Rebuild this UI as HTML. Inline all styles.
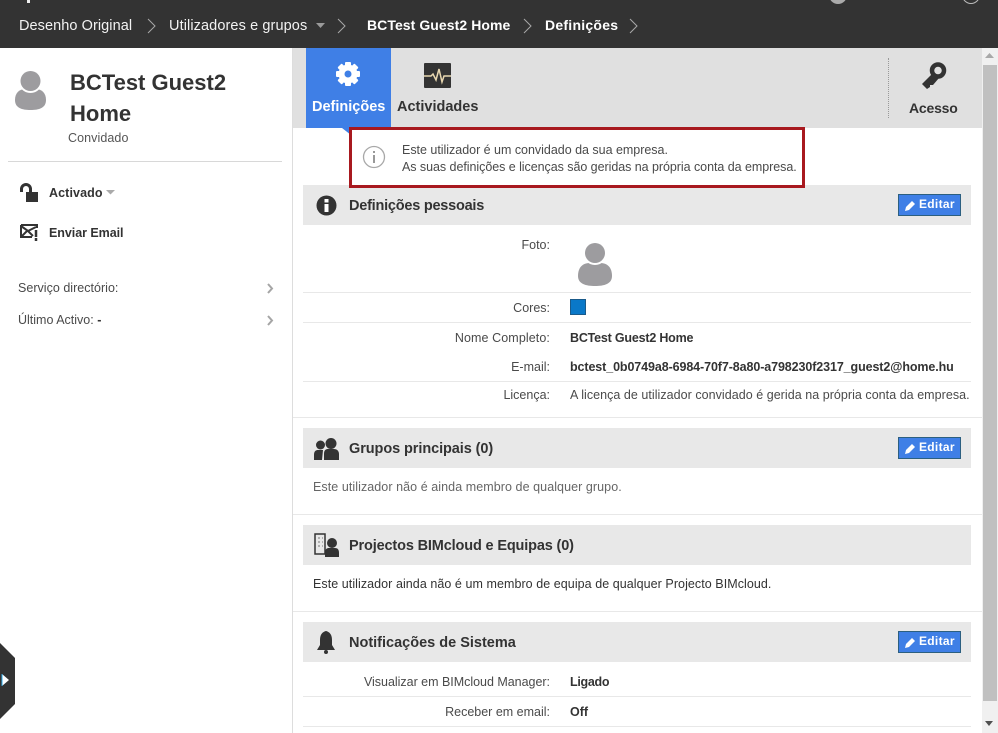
<!DOCTYPE html>
<html><head><meta charset="utf-8">
<style>
html,body{margin:0;padding:0;background:#fff;}
body{width:998px;height:733px;position:relative;overflow:hidden;font-family:"Liberation Sans",sans-serif;color:#333;}
.a{position:absolute;}
.t{position:absolute;white-space:nowrap;font-size:12.5px;line-height:16px;color:#4a4a4a;letter-spacing:0;}
.r{text-align:right;right:448px;}
.b{font-weight:bold;color:#333;}
.h{position:absolute;left:303px;width:668px;height:40px;background:#e8e8e8;}
.ht{position:absolute;left:349px;white-space:nowrap;font-size:14.5px;font-weight:bold;color:#333;line-height:20px;}
.l{position:absolute;height:1px;background:#e8e8e8;left:303px;width:668px;}
.ed{position:absolute;left:898px;width:61px;height:20px;background:#3f7fe6;border:1px solid #2c5f80;color:#fff;font-weight:bold;font-size:12px;line-height:20px;letter-spacing:.3px;}
.ed span{position:absolute;left:20px;top:-1px;}
.ed svg{position:absolute;left:6px;top:4px;}
.nav{position:absolute;top:17px;font-size:14.5px;line-height:18px;color:#f2f2f2;white-space:nowrap;}
</style></head><body>
<div class="a" style="left:0;top:0;width:998px;height:48px;background:#333;"></div>
<div class="a" style="left:27px;top:0;width:3px;height:3px;background:#eee;"></div>
<div class="a" style="left:829px;top:-14px;width:18px;height:18px;border-radius:50%;background:#aaa;"></div>
<div class="a" style="left:962px;top:-14px;width:16px;height:16px;border-radius:50%;border:1px solid #bbb;"></div>
<div class="nav" style="left:19px;letter-spacing:.07px;">Desenho Original</div>
<div class="nav" style="left:169px;letter-spacing:.1px;">Utilizadores e grupos</div>
<div class="nav b" style="left:367px;top:16px;color:#fff;font-weight:bold;font-size:14px;letter-spacing:.07px;">BCTest Guest2 Home</div>
<div class="nav b" style="left:545px;top:16px;color:#fff;font-weight:bold;font-size:14px;letter-spacing:.25px;">Definições</div>
<svg class="a" style="left:0;top:0;" width="660" height="48" fill="none" stroke="#a8a8a8" stroke-width="1">
<path d="M148 19l7 7-7 7M338 19l7 7-7 7M524 19l7 7-7 7M630 19l7 7-7 7"/>
<path d="M316 23h9l-4.500 5z" fill="#9a9a9a" stroke="none"/>
</svg>

<!-- left panel -->
<div class="a" style="left:292px;top:48px;width:1px;height:685px;background:#ddd;"></div>
<svg class="a" style="left:14px;top:70px;" width="34" height="42"><path d="M1 30C1 23 5 19 12 19h9c7 0 11 4 11 11 0 8-7 10-15.500 10S1 38 1 30z" fill="#9d9c9f"/><circle cx="16.500" cy="11" r="12" fill="#fff"/><circle cx="16.500" cy="11" r="10" fill="#9d9c9f"/></svg>
<div class="t" style="left:70px;top:67px;font-size:22px;line-height:31px;font-weight:bold;color:#333;">BCTest Guest2<br>Home</div>
<div class="t" style="left:68px;top:130px;color:#555;letter-spacing:.08px;">Convidado</div>
<div class="a" style="left:8px;top:161px;width:274px;height:1px;background:#d8d8d8;"></div>
<svg class="a" style="left:18px;top:182px;" width="22" height="22"><path d="M3.500 10V7a4.500 4.500 0 0 1 9 0v4" fill="none" stroke="#333" stroke-width="3"/><rect x="8" y="10" width="12" height="10" fill="#333"/></svg>
<div class="t b" style="left:49px;top:185px;font-size:12.5px;letter-spacing:.1px;">Activado</div>
<svg class="a" style="left:106px;top:190px;" width="10" height="6"><path d="M0 0h9l-4.500 4.500z" fill="#aaa"/></svg>
<svg class="a" style="left:19px;top:223px;" width="20" height="20" fill="none" stroke="#333" stroke-width="2"><path d="M2 2h16v3M2 2v12h11M2 3l7 5 8-4M2 14l6-6M9 8l5 5"/><path d="M17 7v7M17 15v3" stroke-width="2.500"/></svg>
<div class="t b" style="left:49px;top:225px;letter-spacing:-.05px;">Enviar Email</div>
<div class="t" style="left:18px;top:280px;letter-spacing:.02px;">Serviço directório:</div>
<div class="t" style="left:18px;top:312px;">Último Activo: <span class="b">-</span></div>
<svg class="a" style="left:266px;top:283px;" width="10" height="46" fill="none" stroke="#a5a5a5" stroke-width="2"><path d="M2 1l4 4.500-4 4.500M2 33l4 4.500-4 4.500"/></svg>
<svg class="a" style="left:0;top:643px;" width="16" height="76"><path d="M0 0l15 15v46L0 76z" fill="#333"/><path d="M2 31l7 6-7 6z" fill="#fff"/><path d="M2 31v12" stroke="#2aa8e8" stroke-width="1"/></svg>

<!-- tabs -->
<div class="a" style="left:293px;top:48px;width:689px;height:80px;background:#e0e0e0;"></div>
<div class="a" style="left:306px;top:48px;width:85px;height:80px;background:#3f7fe6;"></div>
<svg class="a" style="left:342px;top:128px;" width="10" height="8"><path d="M0 0h9v7z" fill="#3f7fe6"/></svg>
<svg class="a" style="left:335px;top:61px;" width="26" height="26" viewBox="0 0 26 26"><g fill="#fff"><circle cx="13" cy="13" r="9.500"/><rect x="10" y="1" width="6" height="24" rx="1"/><rect x="10" y="1" width="6" height="24" rx="1" transform="rotate(45 13 13)"/><rect x="10" y="1" width="6" height="24" rx="1" transform="rotate(90 13 13)"/><rect x="10" y="1" width="6" height="24" rx="1" transform="rotate(135 13 13)"/></g><circle cx="13" cy="13" r="3.500" fill="#3f7fe6"/></svg>
<div class="t" style="left:312px;top:98px;font-size:14.5px;line-height:18px;font-weight:bold;color:#fff;">Definições</div>
<svg class="a" style="left:424px;top:63px;" width="28" height="26"><rect width="27" height="25" rx="1" fill="#333"/><path d="M0 13h7l2-2 3 6 3-11 3 13 2-6h7" fill="none" stroke="#e8d7b0" stroke-width="1.500"/></svg>
<div class="t" style="left:397px;top:98px;font-size:14.5px;line-height:18px;font-weight:bold;color:#333;">Actividades</div>
<div class="a" style="left:888px;top:58px;height:60px;border-left:1px dotted #999;"></div>
<svg class="a" style="left:920px;top:61px;" width="28" height="30"><circle cx="18" cy="9.500" r="6" fill="none" stroke="#333" stroke-width="4.500"/><path d="M13 12L2 23l5 5 3-2v-2h3l6-7z" fill="#333"/></svg>
<div class="t" style="left:909px;top:99px;font-size:14px;line-height:18px;font-weight:bold;color:#333;letter-spacing:-.2px;">Acesso</div>

<!-- scrollbar -->
<div class="a" style="left:982px;top:48px;width:16px;height:685px;background:#f0f0f0;"></div>
<div class="a" style="left:983px;top:65px;width:14px;height:636px;background:#c0c0c0;"></div>
<svg class="a" style="left:985px;top:53px;" width="12" height="8"><path d="M4.500 0l4.500 5H0z" fill="#a8a8a8"/></svg>
<svg class="a" style="left:985px;top:720px;" width="12" height="8"><path d="M0 1h8L4 6z" fill="#505050"/></svg>

<!-- personal -->
<div class="h" style="top:185px;"></div>
<svg class="a" style="left:316px;top:195px;" width="21" height="21"><circle cx="10.500" cy="10.500" r="10" fill="#333"/><rect x="8.500" y="9" width="4" height="8" fill="#fff"/><rect x="8.500" y="4" width="4" height="3.500" fill="#fff"/></svg>
<div class="ht" style="top:196px;letter-spacing:-.23px;">Definições pessoais</div>
<div class="ed" style="top:194px;"><svg width="12" height="12"><path d="M0 12l1-4 6-6 3 3-6 6z" fill="#fff"/></svg><span>Editar</span></div>

<div class="t r" style="top:237px;">Foto:</div>
<svg class="a" style="left:578px;top:243px;" width="35" height="44"><path d="M0 33C0 25 4 20 12 20h10c8 0 12 5 12 13 0 8-8 10-17 10S0 41 0 33z" fill="#9d9c9f"/><circle cx="17" cy="10" r="12" fill="#fff"/><circle cx="17" cy="10" r="10" fill="#9d9c9f"/></svg>
<div class="l" style="top:292px;"></div>
<div class="t r" style="top:300px;">Cores:</div>
<div class="a" style="left:570px;top:299px;width:14px;height:14px;background:#0a78c8;border:1px solid #1a5a8a;"></div>
<div class="l" style="top:322px;"></div>
<div class="t r" style="top:330px;letter-spacing:.1px;">Nome Completo:</div>
<div class="t b" style="left:570px;top:330px;letter-spacing:-.2px;">BCTest Guest2 Home</div>
<div class="t r" style="top:359px;">E-mail:</div>
<div class="t b" style="left:570px;top:359px;letter-spacing:-.1px;">bctest_0b0749a8-6984-70f7-8a80-a798230f2317_guest2@home.hu</div>
<div class="l" style="top:381px;"></div>
<div class="t r" style="top:387px;">Licença:</div>
<div class="t" style="left:570px;top:387px;letter-spacing:.04px;">A licença de utilizador convidado é gerida na própria conta da empresa.</div>
<div class="a" style="left:293px;top:417px;width:689px;height:1px;background:#e8e8e8;"></div>

<!-- notice -->
<div class="a" style="left:349px;top:127px;width:450px;height:55px;border:3px solid #a8191f;background:#fff;"></div>
<svg class="a" style="left:362px;top:145px;" width="24" height="24"><circle cx="12" cy="12" r="10.500" fill="none" stroke="#a8a8a8" stroke-width="1.300"/><rect x="11" y="10" width="2" height="8" fill="#999"/><rect x="11" y="6" width="2" height="2" fill="#999"/></svg>
<div class="t" style="left:402px;top:142px;letter-spacing:-.02px;">Este utilizador é um convidado da sua empresa.</div>
<div class="t" style="left:402px;top:159px;letter-spacing:-.05px;">As suas definições e licenças são geridas na própria conta da empresa.</div>

<!-- groups -->
<div class="h" style="top:428px;"></div>
<svg class="a" style="left:313px;top:437px;" width="27" height="24" fill="#333"><circle cx="7.500" cy="8" r="4.500"/><circle cx="18" cy="6.500" r="5.500"/><path d="M1 23v-5c0-4 2-5 4-5h5l-1 10zM11 23v-6c0-4 2-5 4-5h6c3 0 5 2 5 5v6z"/></svg>
<div class="ht" style="top:439px;letter-spacing:-.08px;">Grupos principais (0)</div>
<div class="ed" style="top:437px;"><svg width="12" height="12"><path d="M0 12l1-4 6-6 3 3-6 6z" fill="#fff"/></svg><span>Editar</span></div>
<div class="t" style="left:313px;top:479px;color:#666;letter-spacing:.07px;">Este utilizador não é ainda membro de qualquer grupo.</div>
<div class="a" style="left:293px;top:514px;width:689px;height:1px;background:#e8e8e8;"></div>

<!-- projects -->
<div class="h" style="top:525px;"></div>
<svg class="a" style="left:314px;top:533px;" width="26" height="26"><path d="M1 1h10v20H1z" fill="none" stroke="#333" stroke-width="1.500"/><path d="M4 5h2M8 5h1M4 9h2M8 9h1M4 13h2M8 13h1" stroke="#777"/><circle cx="18" cy="10" r="5" fill="#333"/><path d="M11 24v-4c0-4 2-5 4-5h6c3 0 4 2 4 5v4z" fill="#333"/></svg>
<div class="ht" style="top:536px;letter-spacing:-.15px;">Projectos BIMcloud e Equipas (0)</div>
<div class="t" style="left:313px;top:576px;color:#333;letter-spacing:.06px;">Este utilizador ainda não é um membro de equipa de qualquer Projecto BIMcloud.</div>
<div class="a" style="left:293px;top:611px;width:689px;height:1px;background:#e8e8e8;"></div>

<!-- notifications -->
<div class="h" style="top:622px;"></div>
<svg class="a" style="left:316px;top:631px;" width="20" height="24" fill="#333"><path d="M10 0c4 1 6 4 6 9v5l3 5H1l3-5V9c0-5 2-8 6-9z"/><circle cx="10" cy="21" r="2"/></svg>
<div class="ht" style="top:633px;">Notificações de Sistema</div>
<div class="ed" style="top:631px;"><svg width="12" height="12"><path d="M0 12l1-4 6-6 3 3-6 6z" fill="#fff"/></svg><span>Editar</span></div>
<div class="t r" style="top:674px;letter-spacing:-.02px;">Visualizar em BIMcloud Manager:</div>
<div class="t b" style="left:570px;top:674px;letter-spacing:-.3px;">Ligado</div>
<div class="l" style="top:696px;"></div>
<div class="t r" style="top:704px;">Receber em email:</div>
<div class="t b" style="left:570px;top:704px;">Off</div>
<div class="l" style="top:726px;"></div>
</body></html>
